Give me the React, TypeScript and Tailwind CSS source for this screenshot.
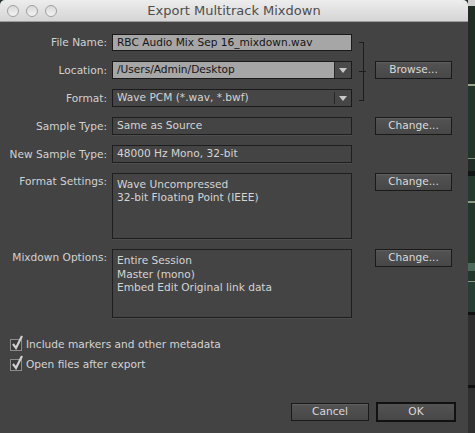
import React from "react";

const Arrow = () => (
  <svg width="8" height="5" viewBox="0 0 8 5">
    <polygon points="0,0 8,0 4,5" fill="#c9c9c9" />
  </svg>
);

const Btn = ({ children, cls = "" }: { children: React.ReactNode; cls?: string }) => (
  <div
    className={
      "flex items-center justify-center border border-[#1a1a1a] bg-gradient-to-b from-[#535353] to-[#474747] text-[#dadada] text-[10.6px] shadow-[inset_0_1px_0_rgba(255,255,255,0.07)] " +
      cls
    }
  >
    {children}
  </div>
);

const Label = ({ children, top = false }: { children: React.ReactNode; top?: boolean }) => (
  <div
    className={
      "pr-[5px] text-right text-[10.6px] text-[#d2d2d2] whitespace-nowrap " +
      (top ? "self-start pt-[2px] leading-[13px]" : "self-center leading-[13px]")
    }
  >
    {children}
  </div>
);

const DarkField = ({ children }: { children: React.ReactNode }) => (
  <div className="flex items-center border border-[#1e1e1e] bg-[#444444] pl-[4px] text-[10.6px] text-[#d4d4d4] shadow-[0_1px_0_rgba(255,255,255,0.06)]">
    {children}
  </div>
);

const Check = ({ label }: { label: string }) => (
  <div className="flex h-[20px] items-center">
    <div className="relative ml-[10px] h-[12px] w-[12px] border border-[#8c8c8c] bg-[#3a3a3a]">
      <svg className="absolute left-[0px] top-[-5px]" width="14" height="16" viewBox="0 0 14 16">
        <path d="M2 9 L5 13 L11 1" fill="none" stroke="#d0d0d0" strokeWidth="2.2" strokeLinejoin="miter" />
      </svg>
    </div>
    <span className="ml-[4px] text-[10.6px] text-[#d4d4d4]">{label}</span>
  </div>
);

export default function App() {
  return (
    <div className="flex h-[433px] w-[475px] overflow-hidden bg-[#23322a] font-['DejaVu_Sans',sans-serif]">
      <div className="flex h-full w-[468px] flex-col overflow-hidden rounded-t-[5px] bg-[#434343]">
        {/* title bar */}
        <div className="relative flex h-[22px] shrink-0 items-center justify-center border-b border-[#9c9c9c] bg-gradient-to-b from-[#ededed] to-[#d5d5d5]">
          <div className="absolute left-[7px] top-[5px] flex gap-[7px]">
            <div className="h-[12px] w-[12px] rounded-full border border-[#9f9f9f] bg-gradient-to-b from-[#d9d9d9] to-[#f3f3f3]" />
            <div className="h-[12px] w-[12px] rounded-full border border-[#9f9f9f] bg-gradient-to-b from-[#d9d9d9] to-[#f3f3f3]" />
            <div className="h-[12px] w-[12px] rounded-full border border-[#9f9f9f] bg-gradient-to-b from-[#d9d9d9] to-[#f3f3f3]" />
          </div>
          <span className="text-[13px] text-[#4d4d4d]">Export Multitrack Mixdown</span>
        </div>

        {/* form grid */}
        <div className="mt-[12px] grid grid-cols-[112px_240px_23px_77px] grid-rows-[17px_18px_18px_18px_18px_66px_69px] gap-y-[10px]">
          {/* row 1 */}
          <Label>File Name:</Label>
          <div className="flex items-center border border-[#1a1a1a] bg-[#a6a6a6] pl-[4px] text-[10.6px] text-[#151515]">
            RBC Audio Mix Sep 16_mixdown.wav
          </div>
          <div className="row-span-3 flex flex-col pb-[6px] pl-[7px] pt-[8px]">
            <div className="w-[5px] flex-1 border-r border-t border-[#1c1c1c]" />
            <div className="h-px w-[7px] bg-[#1c1c1c]" />
            <div className="w-[5px] flex-1 border-b border-r border-[#1c1c1c]" />
          </div>
          <div />

          {/* row 2 */}
          <Label>Location:</Label>
          <div className="flex border border-[#1a1a1a]">
            <div className="flex flex-1 items-center bg-[#a6a6a6] pl-[4px] text-[10.6px] text-[#151515]">
              /Users/Admin/Desktop
            </div>
            <div className="flex w-[17px] items-center justify-center border-l border-[#262626] bg-[#4a4a4a]">
              <Arrow />
            </div>
          </div>
          <Btn>Browse...</Btn>

          {/* row 3 */}
          <Label>Format:</Label>
          <div className="flex items-center border border-[#1a1a1a] bg-[#464646]">
            <div className="flex-1 pl-[4px] text-[10.6px] text-[#d4d4d4]">Wave PCM (*.wav, *.bwf)</div>
            <div className="h-[12px] w-px bg-[#262626]" />
            <div className="flex w-[16px] items-center justify-center">
              <Arrow />
            </div>
          </div>
          <div />

          {/* row 4 */}
          <Label>Sample Type:</Label>
          <DarkField>Same as Source</DarkField>
          <div />
          <Btn>Change...</Btn>

          {/* row 5 */}
          <Label>New Sample Type:</Label>
          <DarkField>48000 Hz Mono, 32-bit</DarkField>
          <div />
          <div />

          {/* row 6 */}
          <Label top>Format Settings:</Label>
          <div className="border border-[#1e1e1e] bg-[#444444] pl-[4px] pt-[4px] text-[10.6px] leading-[13px] text-[#d4d4d4] shadow-[0_1px_0_rgba(255,255,255,0.06)]">
            <div>Wave Uncompressed</div>
            <div>32-bit Floating Point (IEEE)</div>
          </div>
          <div />
          <Btn cls="h-[18px] self-start">Change...</Btn>

          {/* row 7 */}
          <Label top>Mixdown Options:</Label>
          <div className="border border-[#1e1e1e] bg-[#444444] pl-[4px] pt-[4px] text-[10.6px] leading-[13.5px] text-[#d4d4d4] shadow-[0_1px_0_rgba(255,255,255,0.06)]">
            <div>Entire Session</div>
            <div>Master (mono)</div>
            <div>Embed Edit Original link data</div>
          </div>
          <div />
          <Btn cls="h-[18px] self-start">Change...</Btn>
        </div>

        {/* checkboxes */}
        <div className="mt-[17px] flex flex-col">
          <Check label="Include markers and other metadata" />
          <Check label="Open files after export" />
        </div>

        <div className="flex-1" />

        {/* bottom buttons */}
        <div className="flex items-center justify-end gap-[7px] pb-[11px] pr-[12px]">
          <Btn cls="h-[18px] w-[78px]">Cancel</Btn>
          <div className="flex h-[20px] w-[80px] items-center justify-center border-2 border-[#111111] bg-gradient-to-b from-[#535353] to-[#474747] text-[10.6px] text-[#dadada]">
            OK
          </div>
        </div>
      </div>

      {/* background app strip */}
      <div className="flex h-full w-[7px] flex-col">
        <div className="h-[6px] bg-[#cfcfcf]" />
        <div className="h-[78px] bg-[#1f2d25]" />
        <div className="h-[2px] bg-[#9aa58a]" />
        <div className="h-[72px] bg-[#22352b]" />
        <div className="h-px bg-[#7f9080]" />
        <div className="h-[12px] bg-[#1e2d25]" />
        <div className="h-[5px] bg-[#0f1512]" />
        <div className="h-[25px] bg-[#233a2e]" />
        <div className="h-[2px] bg-[#8a9a84]" />
        <div className="h-[60px] bg-[#22372c]" />
        <div className="h-[8px] bg-[#4b6a5a]" />
        <div className="h-[10px] bg-[#22372c]" />
        <div className="h-px bg-[#8a9a84]" />
        <div className="h-[30px] bg-[#244034]" />
        <div className="h-[3px] bg-[#111]" />
        <div className="h-[70px] bg-[#2e2e2e]" />
        <div className="h-[3px] bg-[#111]" />
        <div className="flex-1 bg-[#303030]" />
      </div>
    </div>
  );
}
